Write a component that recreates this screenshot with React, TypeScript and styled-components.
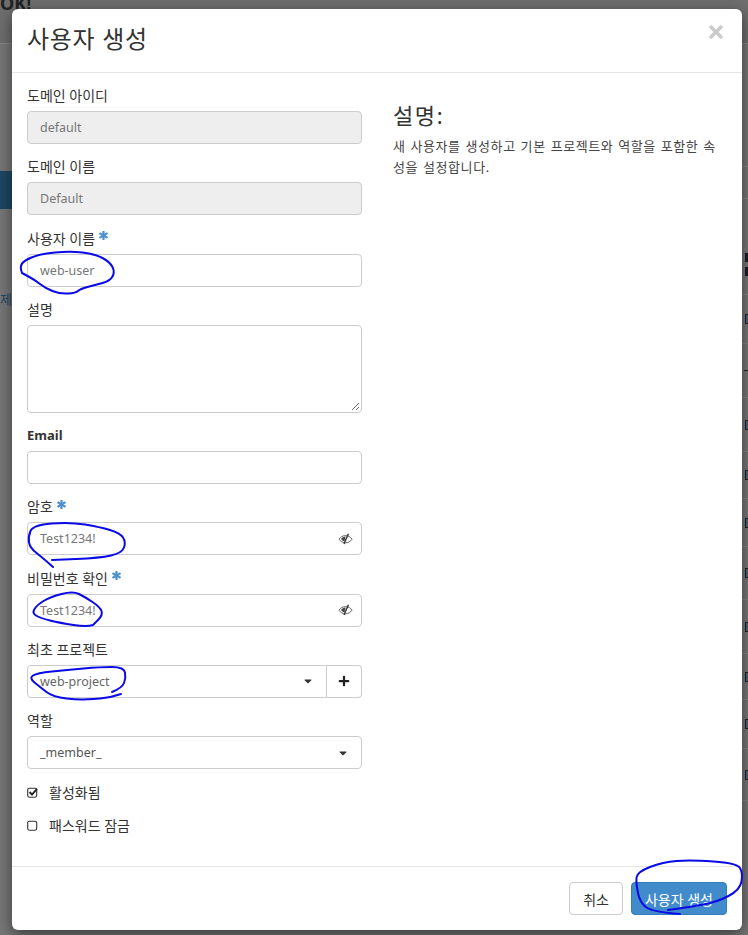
import React from 'react';
import styled, { createGlobalStyle } from 'styled-components';
import { FaAsterisk, FaCaretDown, FaPlus, FaTimes } from 'react-icons/fa';

const GlobalStyle = createGlobalStyle`
  html, body {
    margin: 0;
    padding: 0;
    height: 100%;
    overflow: hidden;
  }
  * {
    box-sizing: border-box;
  }
`;

const FONT = `"Noto Sans", "Noto Sans CJK KR", sans-serif`;

const Page = styled.div`
  position: relative;
  width: 748px;
  height: 935px;
  overflow: hidden;
  background: #777;
  font-family: ${FONT};
  color: #333;
`;

const BackTop = styled.div`
  height: 44px;
  border-bottom: 1px solid #858585;
  background: #6e6e6e;
  color: #222;
  font-size: 18px;
  font-weight: 700;
  line-height: 6px;
`;

const BackBand = styled.div`
  margin-top: 127px;
  height: 38px;
  width: 12px;
  background: #1d4766;
`;

const BackSnippet = styled.div`
  margin-top: 81px;
  font-size: 13px;
  line-height: 18px;
  color: #1d4766;
  width: 12px;
  overflow: hidden;
  white-space: nowrap;
`;

const BackRows = styled.div`
  position: absolute;
  top: 166px;
  right: 0;
  width: 6px;
  border-top: 1px solid #868686;
`;

const BackRow = styled.div<{ $h: number }>`
  height: ${(p) => p.$h}px;
  border-bottom: 1px solid #868686;
  display: flex;
  flex-direction: column;
  align-items: flex-end;
  justify-content: center;
  gap: 6px;
`;

const BackBox = styled.span`
  display: block;
  width: 3px;
  height: 10px;
  border: 1px solid #222;
  border-right: 0;
  background: #4d6379;
`;

const BackDash = styled.span`
  display: block;
  width: 4px;
  height: 1px;
  background: #222;
`;

const BackHead = styled.div`
  margin-top: 36px;
  display: flex;
  flex-direction: column;
  align-items: flex-end;
  gap: 5px;
  width: 100%;
`;

const BackMark = styled.span`
  display: block;
  width: 3px;
  height: 9px;
  background: #1c1c24;
`;

const Modal = styled.div`
  position: absolute;
  left: 12px;
  top: 9px;
  width: 730px;
  height: 921px;
  background: #fff;
  border-radius: 6px;
  box-shadow: 0 5px 15px rgba(0, 0, 0, 0.5);
  display: flex;
  flex-direction: column;
`;

const Header = styled.div`
  height: 64px;
  flex: none;
  padding: 0 15px 4px;
  border-bottom: 1px solid #e5e5e5;
  display: flex;
  align-items: center;
  justify-content: space-between;
`;

const Title = styled.h4`
  margin: 0;
  font-size: 24px;
  font-weight: 400;
  line-height: 1;
  letter-spacing: 0.7px;
  color: #333;
`;

const CloseIcon = styled(FaTimes)`
  color: #cbcbcb;
  font-size: 20px;
  margin: -14px 1px 0 0;
`;

const Body = styled.div`
  flex: 1;
  padding: 13px 15px 0;
  display: grid;
  grid-template-columns: 335px 1fr;
  column-gap: 31px;
`;

const Form = styled.div`
  display: flex;
  flex-direction: column;
`;

const Field = styled.div`
  display: flex;
  flex-direction: column;
  margin-bottom: 13.25px;
`;

const Label = styled.label<{ $bold?: boolean }>`
  font-size: ${(p) => (p.$bold ? 13 : 14)}px;
  line-height: 19px;
  margin-bottom: 6px;
  font-weight: ${(p) => (p.$bold ? 700 : 400)};
  color: #333;
  display: flex;
  align-items: center;
  gap: 4px;
`;

const Required = styled(FaAsterisk)`
  color: #4a90cf;
  font-size: 9px;
  margin-top: -5px;
  stroke: currentColor;
  stroke-width: 40;
`;

const InputBox = styled.div<{ $disabled?: boolean; $tall?: boolean }>`
  height: ${(p) => (p.$tall ? '88px' : '33px')};
  border: 1px solid #ccc;
  border-radius: 4px;
  background: ${(p) => (p.$disabled ? '#eee' : '#fff')};
  color: #777;
  font-size: 12.5px;
  padding: 0 12px;
  display: flex;
  align-items: center;
  justify-content: space-between;
  position: relative;
`;

const PasswordBox = styled(InputBox)`
  padding-right: 8px;
`;

const SelectGroup = styled.div`
  display: flex;
`;

const GroupSelect = styled(InputBox)`
  flex: 1;
  border-radius: 4px 0 0 4px;
  color: #666;
`;

const RoleSelect = styled(InputBox)`
  color: #555;
`;

const AddButton = styled.div`
  width: 35px;
  height: 33px;
  border: 1px solid #ccc;
  border-left: 0;
  border-radius: 0 4px 4px 0;
  display: flex;
  align-items: center;
  justify-content: center;
  color: #222;
  font-size: 12px;
`;

const Caret = styled(FaCaretDown)`
  color: #333;
  font-size: 12px;
`;

const Grip = styled.svg`
  position: absolute;
  right: 1px;
  bottom: 1px;
`;

const CheckRow = styled.div`
  display: flex;
  align-items: center;
  gap: 11px;
  height: 20px;
  margin-bottom: 13px;
  font-size: 14px;
  color: #333;
`;

const Side = styled.div`
  padding-top: 13px;
`;

const SideTitle = styled.h3`
  margin: 0 0 5px;
  font-size: 22px;
  font-weight: 400;
  line-height: 32px;
  letter-spacing: 1.6px;
  color: #333;
`;

const SideText = styled.p`
  margin: 0;
  width: 330px;
  font-size: 13px;
  line-height: 21px;
  letter-spacing: 0.57px;
  word-spacing: 1px;
  color: #444;
  word-break: break-all;
`;

const Footer = styled.div`
  height: 64px;
  flex: none;
  border-top: 1px solid #e5e5e5;
  padding: 15px 15px 0;
  display: flex;
  justify-content: flex-end;
  gap: 8px;
`;

const Button = styled.button<{ $primary?: boolean }>`
  height: 33px;
  padding: 0 13px;
  font-family: ${FONT};
  font-size: 14px;
  border-radius: 4px;
  border: 1px solid ${(p) => (p.$primary ? '#357ebd' : '#ccc')};
  background: ${(p) => (p.$primary ? '#428bca' : '#fff')};
  color: ${(p) => (p.$primary ? '#fff' : '#333')};
`;

const Scribbles = styled.svg`
  position: absolute;
  inset: 0;
  pointer-events: none;
`;

const Scribble = styled.path`
  fill: none;
  stroke: #0a0ae6;
  stroke-width: 2;
  stroke-linecap: round;
  stroke-linejoin: round;
`;

function EyeSlash() {
  return (
    <svg width="15" height="12" viewBox="0 0 15 12">
      <path d="M1 6.2C2.6 3.8 4.8 2.6 7.5 2.6S12.4 3.8 14 6.2C12.4 8.6 10.2 9.8 7.5 9.8S2.6 8.6 1 6.2Z" fill="none" stroke="#555" strokeWidth="0.9" />
      <path d="M3 6C4 4.6 5.6 3.6 7.6 3.5L6.4 8.4C5 8 3.8 7.1 3 6Z" fill="#444" />
      <path d="M10.4 0.8 6 11" stroke="#333" strokeWidth="1.4" />
    </svg>
  );
}

function CheckBox({ checked }: { checked?: boolean }) {
  return (
    <svg width="11" height="11" viewBox="0 0 11 11">
      <rect x="0.7" y="1.2" width="9" height="9" rx="1.6" fill="none" stroke="#333" strokeWidth="1.1" />
      {checked && <path d="M2.6 5 5 7.6 10 1.8" fill="none" stroke="#222" strokeWidth="1.9" />}
    </svg>
  );
}

// hand drawn circles, smoothed through the midpoints
const toPath = (pts: number[][]) => {
  let d = `M${pts[0][0]} ${pts[0][1]}`;
  for (let i = 1; i < pts.length - 1; i++) {
    const mx = (pts[i][0] + pts[i + 1][0]) / 2;
    const my = (pts[i][1] + pts[i + 1][1]) / 2;
    d += ` Q${pts[i][0]} ${pts[i][1]} ${mx} ${my}`;
  }
  const last = pts[pts.length - 1];
  return `${d} L${last[0]} ${last[1]}`;
};

const SCRIBBLES = [
  [[22, 273], [20, 268], [23, 261], [40, 254], [70, 251], [95, 254], [110, 262], [115, 272], [110, 281], [95, 285], [80, 289], [76, 293], [60, 294], [45, 288], [35, 280], [22, 273]],
  [[53, 567], [43, 558], [30, 548], [28, 537], [33, 525], [70, 522], [100, 527], [120, 533], [126, 542], [122, 553], [100, 558], [52, 560]],
  [[93, 625], [87, 627], [60, 623], [40, 618], [32, 613], [37, 605], [50, 597], [73, 591], [85, 597], [100, 607], [103, 615], [93, 625]],
  [[112, 692], [122, 688], [126, 678], [124, 667], [100, 667], [67, 670], [37, 673], [29, 678], [40, 687], [53, 697], [80, 700], [107, 698], [121, 694]],
  [[680, 914], [653, 912], [640, 903], [636, 883], [637, 872], [663, 862], [690, 860], [737, 863], [743, 873], [740, 890], [717, 902], [690, 907], [668, 910]],
];

const BACK_ROWS = [
  { h: 32, kind: 'empty' },
  { h: 96, kind: 'head' },
  { h: 49, kind: 'box' },
  { h: 54, kind: 'dash' },
  { h: 54, kind: 'box' },
  { h: 47, kind: 'box' },
  { h: 48, kind: 'box' },
  { h: 53, kind: 'box' },
  { h: 54, kind: 'box' },
  { h: 46, kind: 'box' },
  { h: 49, kind: 'box' },
  { h: 52, kind: 'box' },
];

export default function App() {
  return (
    <Page>
      <GlobalStyle />
      <BackTop>OK!</BackTop>
      <BackBand />
      <BackSnippet>제 (</BackSnippet>
      <BackRows>
        {BACK_ROWS.map((row, i) => (
          <BackRow key={i} $h={row.h}>
            {row.kind === 'box' && <BackBox />}
            {row.kind === 'dash' && <BackDash />}
            {row.kind === 'head' && (
              <BackHead>
                <BackMark />
                <BackMark />
              </BackHead>
            )}
          </BackRow>
        ))}
      </BackRows>
      <Modal>
        <Header>
          <Title>사용자 생성</Title>
          <CloseIcon />
        </Header>
        <Body>
          <Form>
            <Field>
              <Label>도메인 아이디</Label>
              <InputBox $disabled>default</InputBox>
            </Field>
            <Field>
              <Label>도메인 이름</Label>
              <InputBox $disabled>Default</InputBox>
            </Field>
            <Field>
              <Label>사용자 이름 <Required /></Label>
              <InputBox>web-user</InputBox>
            </Field>
            <Field>
              <Label>설명</Label>
              <InputBox $tall>
                <Grip width="10" height="10" viewBox="0 0 10 10">
                  <path d="M9 2 2 9M9 6 6 9" stroke="#666" strokeWidth="1" />
                </Grip>
              </InputBox>
            </Field>
            <Field>
              <Label $bold>Email</Label>
              <InputBox />
            </Field>
            <Field>
              <Label>암호 <Required /></Label>
              <PasswordBox>Test1234!<EyeSlash /></PasswordBox>
            </Field>
            <Field>
              <Label>비밀번호 확인 <Required /></Label>
              <PasswordBox>Test1234!<EyeSlash /></PasswordBox>
            </Field>
            <Field>
              <Label>최초 프로젝트</Label>
              <SelectGroup>
                <GroupSelect>web-project<Caret /></GroupSelect>
                <AddButton><FaPlus /></AddButton>
              </SelectGroup>
            </Field>
            <Field>
              <Label>역할</Label>
              <RoleSelect>_member_<Caret /></RoleSelect>
            </Field>
            <CheckRow><CheckBox checked />활성화됨</CheckRow>
            <CheckRow><CheckBox />패스워드 잠금</CheckRow>
          </Form>
          <Side>
            <SideTitle>설명:</SideTitle>
            <SideText>새 사용자를 생성하고 기본 프로젝트와 역할을 포함한 속성을 설정합니다.</SideText>
          </Side>
        </Body>
        <Footer>
          <Button>취소</Button>
          <Button $primary>사용자 생성</Button>
        </Footer>
      </Modal>
      <Scribbles width="748" height="935" viewBox="0 0 748 935">
        {SCRIBBLES.map((pts, i) => (
          <Scribble key={i} d={toPath(pts)} />
        ))}
      </Scribbles>
    </Page>
  );
}
